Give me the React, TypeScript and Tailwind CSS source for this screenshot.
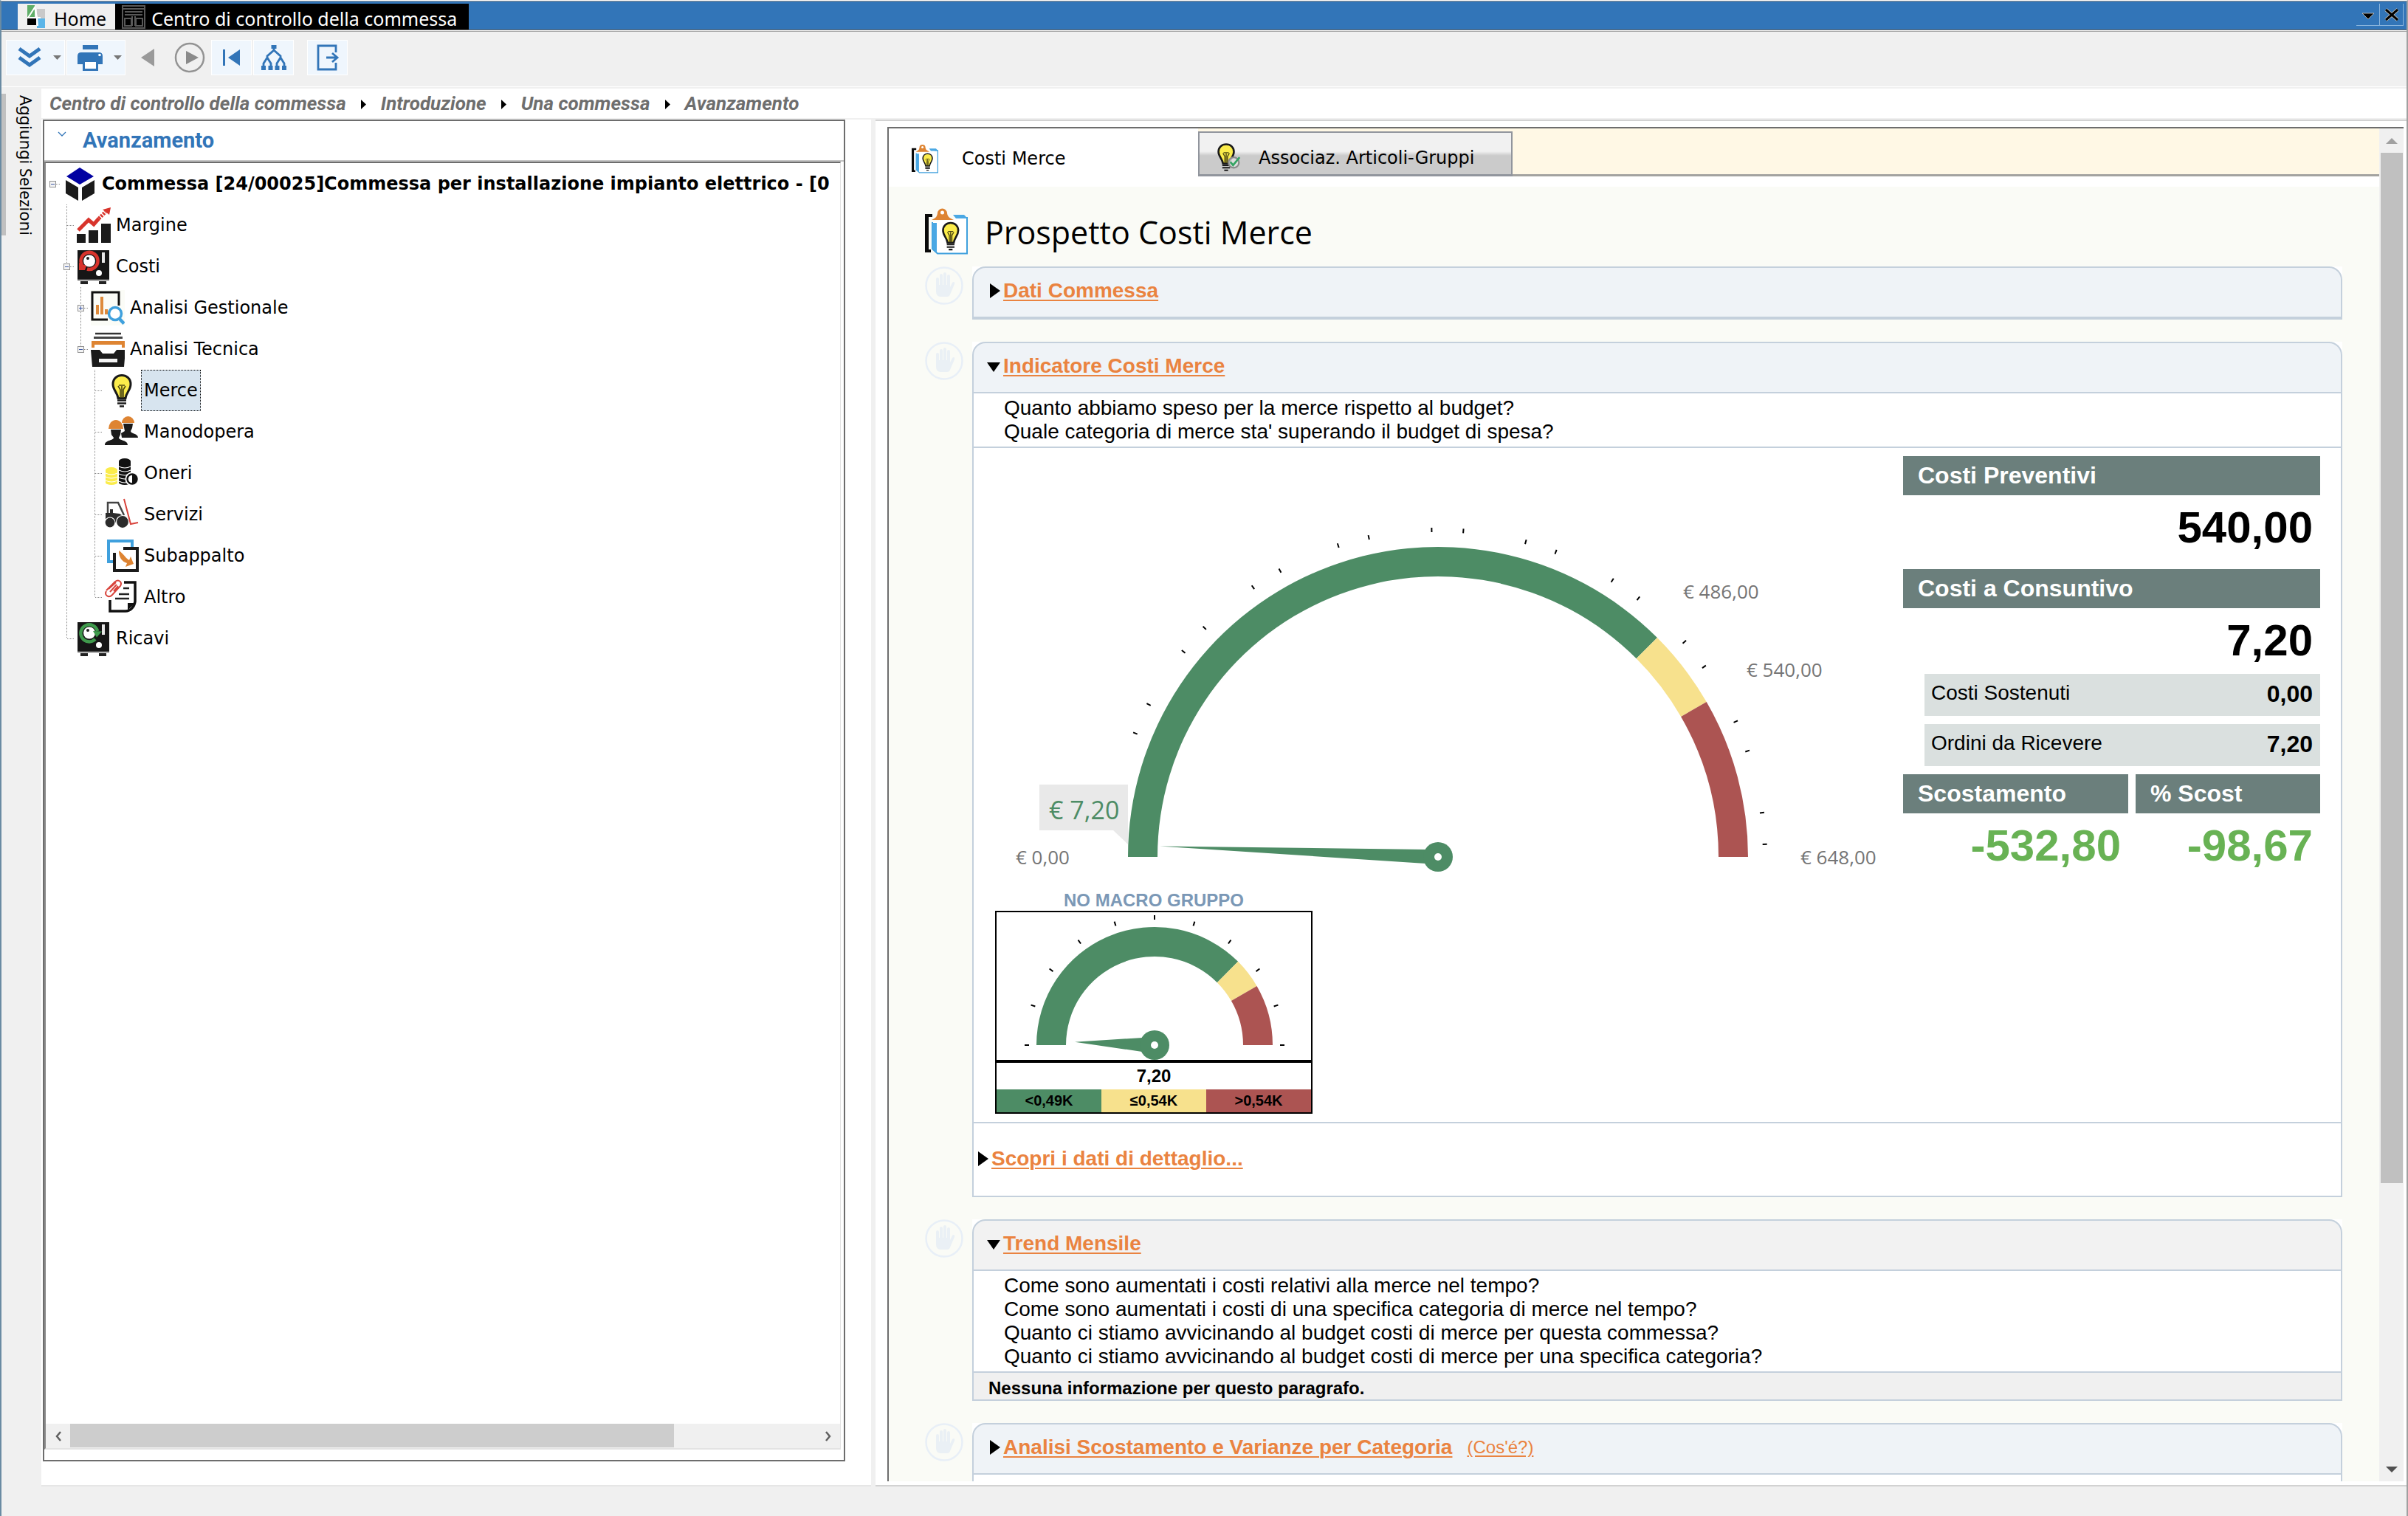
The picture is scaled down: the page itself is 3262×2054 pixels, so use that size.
import React, { useState } from 'react'
import clsx from 'clsx'

const GREEN = '#4d8c65'
const YELLOW = '#f7e18d'
const RED = '#ac5452'

/* ---------- gauge ---------- */

// angle in degrees, 0 = left end of the half circle, 180 = right end
function polar(cx: number, cy: number, r: number, deg: number): [number, number] {
  const a = (deg * Math.PI) / 180
  return [cx - r * Math.cos(a), cy - r * Math.sin(a)]
}

function band(cx: number, cy: number, r1: number, r2: number, from: number, to: number) {
  const [ax, ay] = polar(cx, cy, r2, from)
  const [bx, by] = polar(cx, cy, r2, to)
  const [dx, dy] = polar(cx, cy, r1, to)
  const [ex, ey] = polar(cx, cy, r1, from)
  return `M${ax} ${ay}A${r2} ${r2} 0 0 1 ${bx} ${by}L${dx} ${dy}A${r1} ${r1} 0 0 0 ${ex} ${ey}Z`
}

type DialProps = {
  cx: number
  cy: number
  inner: number
  outer: number
  needle: number
  ticks: number[]
  tickRadius: number
}

function Dial({ cx, cy, inner, outer, needle, ticks, tickRadius }: DialProps) {
  const [tx, ty] = polar(cx, cy, needle, 2.2)
  const [ux, uy] = polar(cx, cy, 19, 32)
  const [lx, ly] = polar(cx, cy, 19, -28)
  return (
    <g>
      <path d={band(cx, cy, inner, outer, 0, 135)} fill={GREEN} />
      <path d={band(cx, cy, inner, outer, 135, 150)} fill={YELLOW} />
      <path d={band(cx, cy, inner, outer, 150, 180)} fill={RED} />
      {ticks.map((t) => {
        const [x1, y1] = polar(cx, cy, tickRadius, t)
        const [x2, y2] = polar(cx, cy, tickRadius + 6, t)
        return <line key={t} x1={x1} y1={y1} x2={x2} y2={y2} stroke="#000" strokeWidth="2" />
      })}
      <polygon points={`${tx},${ty} ${ux},${uy} ${lx},${ly}`} fill={GREEN} />
      <circle cx={cx} cy={cy} r="20" fill={GREEN} />
      <circle cx={cx} cy={cy} r="5" fill="#fff" />
    </g>
  )
}

const bigTicks = Array.from({ length: 32 }, (_, i) => i + 1)
  .filter((n) => n > 3 && n % 3 !== 0)
  .map((n) => (n * 180) / 32.4)
const smallTicks = Array.from({ length: 11 }, (_, i) => i * 18)

function BigGauge() {
  return (
    <svg viewBox="0 0 1259 583" className="block w-full font-['Open_Sans',sans-serif]" role="img" aria-label="Indicatore costi merce">
      <Dial cx={629} cy={554} inner={380} outer={420} needle={377} ticks={bigTicks} tickRadius={440} />
      <path d="M89 456H209V537L189 518H89Z" fill="#e9e9e9" />
      <text x="102" y="503" className="text-[34px]" fill={GREEN}>€ 7,20</text>
      <g className="text-[26px]" fill="#757575">
        <text x="57" y="564">€ 0,00</text>
        <text x="961" y="204">€ 486,00</text>
        <text x="1047" y="310">€ 540,00</text>
        <text x="1120" y="564">€ 648,00</text>
      </g>
    </svg>
  )
}

/* ---------- icons ---------- */

function BulbShape() {
  return (
    <g>
      <path d="M23 3.5c-7 0-12 5-12 12 0 8 6 11 7 19h10c1-8 7-11 7-19 0-7-5-12-12-12z" fill="#fbec4b" stroke="#1a1a1a" strokeWidth="3" />
      <path d="M18 18l3 5v11M28 18l-3 5v11M19 17h8M23 18v16" fill="none" stroke="#4d4711" strokeWidth="1.6" />
      <path d="M17 37.5h12M17 41.5h12M20 45.5h6" stroke="#1a1a1a" strokeWidth="2.4" />
    </g>
  )
}

function SafeShape({ tone }: { tone: string }) {
  return (
    <g>
      <path d="M1 2h43v41H1z" fill="#161616" />
      <path d="M1 41h43v2H1z" fill="#555" />
      <path d="M5 44h10v4H5zM30 44h10v4H30z" fill="#222" />
      <circle cx="17" cy="16.5" r="8" fill="#fff" />
      <circle cx="15" cy="13" r="2" fill="#222" />
      <path d="M34 5h4v14h-4z" fill="#e8e8e8" />
      <circle cx="30" cy="33" r="4" fill="#fff" />
      <g fill="none" stroke={tone} strokeWidth="4.5">
        {tone === '#d8342c' ? (
          <>
            <path d="M14 27.500A11.500 11.500 0 1 0 7 22" />
            <path d="M3 19l10 4-2 6H3z" fill={tone} stroke="none" />
          </>
        ) : (
          <>
            <path d="M25 25A11.500 11.500 0 1 1 28 14" />
            <path d="M22 14l12 .5-7 8z" fill={tone} stroke="none" />
          </>
        )}
      </g>
    </g>
  )
}

const treeIcons: Record<string, React.ReactNode> = {
  cube: (
    <>
      <path d="M23 2l19 12-19 11L5 14z" fill="#0202a2" />
      <path d="M4 19l17 10v18L4 37zM43 19L26 29v18l17-10z" fill="#1b1b1b" />
    </>
  ),
  margine: (
    <>
      <path d="M0 36h12v12H0zM16 31h13v17H16zM33 22h13v26H33z" fill="#1b1b1b" />
      <path d="M2 31l14-14 7 6 7-8" fill="none" stroke="#d8342c" strokeWidth="5" />
      <path d="M30 15l9-9" stroke="#d8342c" strokeWidth="5" strokeDasharray="2.5 1.5" />
      <path d="M46 0l-2 10-9-7z" fill="#d8342c" />
    </>
  ),
  costi: <SafeShape tone="#d8342c" />,
  ricavi: <SafeShape tone="#3f9a4c" />,
  gestionale: (
    <>
      <path d="M0 0h46v48H0z" fill="#fbfcf7" />
      <path d="M38 21V3H2v37h21" fill="none" stroke="#111" strokeWidth="3" />
      <path d="M7 20h4v13H7zM13 9h4v24h-4zM19 26h4v7h-4z" fill="#de8a3c" />
      <circle cx="33" cy="32" r="8.5" fill="#fff" stroke="#3fa0dd" strokeWidth="3.5" />
      <path d="M38.5 38.5l6.5 7" stroke="#3fa0dd" strokeWidth="4.5" />
    </>
  ),
  tecnica: (
    <>
      <path d="M6 3h35" stroke="#333" strokeWidth="2.5" />
      <path d="M4 8.500h39" stroke="#444" strokeWidth="3" />
      <path d="M1 13h45v9h-4v-4H5v4H1z" fill="#de8432" />
      <path d="M0 25h12l4 5h15l4-5h12l-2 23H2z" fill="#1b1b1b" />
      <path d="M11 37h25v5H11z" fill="#f4f4f4" />
    </>
  ),
  merce: <BulbShape />,
  manodopera: (
    <>
      <path d="M23 12a8.500 9 0 0 1 17 0z" fill="#de8432" />
      <path d="M25 13h13l-1 6-2 4c0 4 10 3 10 9H23l-1-6 5-3z" fill="#1b1b1b" />
      <path d="M5 20a10 12 0 0 1 20 0z" fill="#de8432" />
      <path d="M8 21h14l-1 7-2 4c0 4 12 3 12 10H0c0-7 12-6 12-10l-3-4z" fill="#1b1b1b" />
    </>
  ),
  oneri: (
    <>
      <path d="M1 20a8 4 0 0 1 16 0v17a8 3 0 0 1-16 0z" fill="#fbec4b" />
      <path d="M1 24q8 4 16 0M1 29q8 4 16 0M1 34q8 4 16 0" fill="none" stroke="#fff" strokeWidth="1" />
      <path d="M19 8a8 4 0 0 1 16 0v29a8 3 0 0 1-16 0z" fill="#111" />
      <path d="M19 15q8 4 16 0M19 20q8 4 16 0M19 25q8 4 16 0M19 30q8 4 16 0M19 35q8 4 16 0" fill="none" stroke="#fff" strokeWidth="1.2" />
      <circle cx="37" cy="32" r="9.5" fill="#fff" />
      <circle cx="37" cy="32" r="6.5" fill="#fff" stroke="#111" strokeWidth="2.5" />
      <path d="M37 25a7 7 0 0 1 0 14z" fill="#111" />
    </>
  ),
  servizi: (
    <>
      <path d="M4 22V8h14l8 17" fill="none" stroke="#444" strokeWidth="2.5" />
      <path d="M7 17h4v5l9 1 6 4v8H1V22h6z" fill="#2b2b2b" />
      <circle cx="7" cy="35" r="7" fill="#2b2b2b" stroke="#fff" strokeWidth="1.2" />
      <circle cx="24" cy="34" r="8.5" fill="#2b2b2b" stroke="#fff" strokeWidth="1.2" />
      <path d="M26 3l9 34 10-2" fill="none" stroke="#d8443c" strokeWidth="2" />
    </>
  ),
  subappalto: (
    <>
      <path d="M37 12V4H5v28h8" fill="none" stroke="#3fa0dd" strokeWidth="4" />
      <path d="M25 14h19v30H13V20" fill="none" stroke="#1b1b1b" strokeWidth="4" />
      <path d="M19 17c7 5 9 10 14 13l2-5 4 10-11 4 2-5c-7-2-11-8-11-17z" fill="#de8432" />
    </>
  ),
  altro: (
    <>
      <path d="M26 4h15v26c-1 7-6 13-13 13H7V28" fill="none" stroke="#111" strokeWidth="3.5" />
      <path d="M41 32H31v10z" fill="#111" />
      <path d="M25 12h8M19 20h14M14 26h19" stroke="#222" strokeWidth="2.5" />
      <path d="M2 15L14 3c5-4 10 1 7 6L10 21c-5 5-11 0-8-5M7 17l9-10M5 13L15 4M12 16l6-7" fill="none" stroke="#d8443c" strokeWidth="2" />
    </>
  ),
}

function ClipboardIcon({ className }: { className: string }) {
  return (
    <svg viewBox="0 0 58 64" className={className}>
      <path d="M10 9H0v52h8v-4H5V13h5z" fill="#0a0a0a" />
      <path d="M10 20v36l7 6.500h40V14h-7" fill="#fff" stroke="#3fa0dd" strokeWidth="2" />
      <path d="M10 21h6v40l-6-5zM38 10h15l5 5H42z" fill="#4aa8e4" />
      <path d="M9 17c6-3 7-4 8-9a6.500 6.500 0 0 1 13 0c1 5 3 6 9 9z" fill="#de8432" />
      <circle cx="23.5" cy="7" r="2.5" fill="#fff" />
      <g transform="translate(15 18) scale(.86)">
        <BulbShape />
      </g>
    </svg>
  )
}

function HandIcon() {
  return (
    <svg viewBox="0 0 52 52" className="h-13 w-13 shrink-0" fill="#eaf0f5">
      <circle cx="26" cy="26" r="24.5" fill="none" stroke="#e8eff7" strokeWidth="2.5" />
      <rect x="15" y="15" width="4" height="16" rx="2" />
      <rect x="20" y="10" width="4" height="20" rx="2" />
      <rect x="25" y="8" width="4" height="20" rx="2" />
      <rect x="30" y="11" width="4" height="20" rx="2" />
      <path d="M15 25h19v3l3-6c2-2 4-1 3 2l-6 14c-1 3-3 3-6 3h-7c-4 0-6-3-6-7z" />
    </svg>
  )
}

/* ---------- title bar + toolbar ---------- */

function TitleBar() {
  return (
    <header className="flex h-[42px] shrink-0 items-start border-b border-t border-b-[#a0a0a0] border-t-[#8c8c8c] bg-white font-['Noto_Sans',sans-serif] text-[25px]">
      <div className="flex h-[39px] flex-1 items-end border-b border-[#5f5f5f] bg-[#3275b8] pl-[22px]">
        <button className="flex h-[35px] items-center gap-3 bg-[#f0f0f0] pl-[13px] pr-3">
          <svg viewBox="0 0 24 31" className="h-[31px] w-6">
            <path d="M0 0h10v16H0z" fill="#5fae68" />
            <path d="M13 5h11v14H13z" fill="#c9c9c9" />
            <path d="M0 18h12v9H0z" fill="#000" />
            <path d="M13 18h11v13H13z" fill="#5bb5e8" />
            <path d="M1 17L10 3l3 13 1 12M4 17h14" fill="none" stroke="#fff" strokeWidth="2" />
          </svg>
          <span className="pt-1 leading-8">Home</span>
        </button>
        <button className="flex h-[35px] items-center gap-2 bg-black pl-[9px] pr-4 text-white">
          <svg viewBox="0 0 32 32" className="h-8 w-8" fill="none" stroke="#585858" strokeWidth="2">
            <path d="M1 1h30v30H1zM1 5h30M4 9h24M4 13h24M4 18h9v10H4zM19 18h9v10h-9zM14 15v13M18 15v13" />
          </svg>
          <span className="pt-1 leading-8">Centro di controllo della commessa</span>
        </button>
        <div className="ml-auto mr-1 flex h-[35px] items-start">
          <button aria-label="Elenco finestre" className="flex h-[30px] w-8 items-center justify-center border-b border-r border-[#8db6dd]">
            <svg viewBox="0 0 18 10" className="mt-1 h-2.5 w-[18px]">
              <path d="M1 1h16L9 9z" fill="#000" stroke="#d8cfc0" strokeWidth=".8" />
            </svg>
          </button>
          <button aria-label="Chiudi" className="flex h-[30px] w-8 items-center justify-center border-b border-r border-[#8db6dd]">
            <svg viewBox="0 0 20 18" className="h-[18px] w-5">
              <path d="M2 2l16 14M18 2L2 16" stroke="#d8cfc0" strokeWidth="4.5" />
              <path d="M2 2l16 14M18 2L2 16" stroke="#000" strokeWidth="3" />
            </svg>
          </button>
        </div>
      </div>
    </header>
  )
}

function ToolButton({ label, wide, plain, className, children }: { label: string; wide?: boolean; plain?: boolean; className?: string; children: React.ReactNode }) {
  return (
    <button
      aria-label={label}
      title={label}
      className={clsx(
        'flex h-12 items-center border',
        wide ? 'w-20 justify-between pl-[13px] pr-1' : 'w-[55px] justify-center',
        plain ? 'border-transparent' : 'border-white bg-[#eff6fd]',
        className
      )}
    >
      {children}
    </button>
  )
}

function Caret() {
  return (
    <svg viewBox="0 0 11 6" className="h-1.5 w-[11px]">
      <path d="M0 0h11L5.500 6z" fill="#777" />
    </svg>
  )
}

function Toolbar() {
  return (
    <div className="mb-0.5 flex h-[75px] shrink-0 items-start gap-0.5 border-b border-white pl-1.5 pt-[11px]">
      <ToolButton label="Espandi" wide>
        <svg viewBox="0 0 36 34" className="h-[34px] w-9" fill="none" stroke="#3275b8" strokeWidth="5">
          <path d="M4 5l14 10L32 5M4 17l14 10 14-10" />
        </svg>
        <Caret />
      </ToolButton>
      <ToolButton label="Stampa" wide>
        <svg viewBox="0 0 36 36" className="h-9 w-9" fill="#3275b8">
          <path d="M8 1h21v6H8zM1 16q0-5 5-5h24q5 0 5 5v11h-6v-6H8v6H1z" />
          <path d="M9.500 22.500h18v12h-18z" fill="#fff" stroke="#3275b8" strokeWidth="3" />
          <circle cx="31" cy="14.5" r="1.8" fill="#fff" />
        </svg>
        <Caret />
      </ToolButton>
      <ToolButton label="Indietro" plain>
        <svg viewBox="0 0 18 24" className="h-6 w-[18px]">
          <path d="M18 0v24L0 12z" fill="#9a9a9a" />
        </svg>
      </ToolButton>
      <ToolButton label="Avanti" plain>
        <svg viewBox="0 0 42 42" className="h-[42px] w-[42px]">
          <circle cx="21" cy="21" r="19" fill="none" stroke="#939393" strokeWidth="2.5" />
          <path d="M16 12v18l17-9z" fill="#8a8a8a" />
        </svg>
      </ToolButton>
      <ToolButton label="Inizio">
        <svg viewBox="0 0 24 24" className="h-6 w-6" fill="#3275b8">
          <path d="M0 1h3v22H0zM23 1v22L7 12z" />
        </svg>
      </ToolButton>
      <ToolButton label="Struttura">
        <svg viewBox="0 0 36 36" className="h-9 w-9">
          <path d="M18 4v4l-9 8v4M18 8l9 8v4M9 18l-5 8v6M9 18l5 8v6M27 18l-5 8v6M27 18l5 8v6" fill="none" stroke="#3275b8" strokeWidth="2.8" />
          <path d="M14.500 1h7v5h-7zM1 29h6v6H1zM10.500 29h6v6h-6zM19.500 29h6v6h-6zM29 29h6v6h-6z" fill="#3275b8" />
        </svg>
      </ToolButton>
      <ToolButton label="Esci" className="ml-4">
        <svg viewBox="0 0 32 36" className="h-9 w-8" fill="none" stroke="#3275b8" strokeWidth="2.8">
          <path d="M27 11V2H3v32h24v-9" />
          <path d="M14 18h14M22 12l7 6-7 6" />
        </svg>
      </ToolButton>
    </div>
  )
}

function Breadcrumb() {
  const steps = ['Centro di controllo della commessa', 'Introduzione', 'Una commessa', 'Avanzamento']
  return (
    <nav className="flex h-10 shrink-0 items-center gap-5 bg-white pl-[11px] font-[Roboto,sans-serif] text-[26px] font-bold italic leading-10 text-[#6e6e6e]">
      {steps.map((s, i) => (
        <React.Fragment key={s}>
          {i > 0 && (
            <svg viewBox="0 0 7 13" className="mt-0.5 h-[13px] w-[7px]">
              <path d="M0 0l7 6.500L0 13z" fill="#000" />
            </svg>
          )}
          <a href="#">{s}</a>
        </React.Fragment>
      ))}
    </nav>
  )
}

/* ---------- tree ---------- */

// guides, one char per column: '|' line, '+' line with branch, 'L' last branch,
// 'm'/'p' minus/plus box, capitals when the line ends there, '-' lone box, ' ' empty
type Node = { label: string; icon: string; guides: string }

const nodes: Node[] = [
  { label: 'Commessa [24/00025]Commessa per installazione impianto elettrico - [0', icon: 'cube', guides: '-' },
  { label: 'Margine', icon: 'margine', guides: ' +' },
  { label: 'Costi', icon: 'costi', guides: ' m' },
  { label: 'Analisi Gestionale', icon: 'gestionale', guides: ' |p' },
  { label: 'Analisi Tecnica', icon: 'tecnica', guides: ' |M' },
  { label: 'Merce', icon: 'merce', guides: ' | +' },
  { label: 'Manodopera', icon: 'manodopera', guides: ' | +' },
  { label: 'Oneri', icon: 'oneri', guides: ' | +' },
  { label: 'Servizi', icon: 'servizi', guides: ' | +' },
  { label: 'Subappalto', icon: 'subappalto', guides: ' | +' },
  { label: 'Altro', icon: 'altro', guides: ' | L' },
  { label: 'Ricavi', icon: 'ricavi', guides: ' L' },
]

function Guide({ kind }: { kind: string }) {
  const box = 'mpM-'.includes(kind)
  const end = '|+mp'.includes(kind) ? 56 : 28
  return (
    <svg viewBox="0 0 19 56" className="h-14 w-[19px] shrink-0 overflow-visible">
      {kind !== ' ' && kind !== '-' && <path d={`M9.5 0V${end}`} stroke="#8a8a8a" strokeWidth="1" strokeDasharray="1 1" />}
      {kind !== ' ' && kind !== '|' && <path d="M10 28.500h10" stroke="#8a8a8a" strokeWidth="1" strokeDasharray="1 1" />}
      {box && (
        <>
          <rect x="5.5" y="24.5" width="8" height="8" fill="#f4f4f4" stroke="#919191" />
          <path d={kind === 'p' ? 'M7 28.500h5M9.500 26v5' : 'M7 28.500h5'} stroke="#3b57a6" strokeWidth="1" />
        </>
      )}
    </svg>
  )
}

function ScrollArrow({ dir, label }: { dir: 'left' | 'right' | 'up' | 'down'; label: string }) {
  const d = {
    left: 'M11 2L6 8l5 6',
    right: 'M5 2l5 6-5 6',
    up: 'M0 12h16L8 4z',
    down: 'M0 4h16l-8 8z',
  }[dir]
  const line = dir === 'left' || dir === 'right'
  return (
    <button aria-label={label} className="flex h-[33px] w-[33px] shrink-0 items-center justify-center">
      <svg viewBox="0 0 16 16" className="h-4 w-4" fill={line ? 'none' : dir === 'up' ? '#a0a0a0' : '#505050'} stroke={line ? '#606060' : 'none'} strokeWidth="2.5">
        <path d={d} />
      </svg>
    </button>
  )
}

function TreePanel() {
  const [selected, setSelected] = useState('Merce')
  return (
    <section className="flex w-[1124px] shrink-0 flex-col border-b-2 border-[#e6e6e6] bg-white pb-8 pl-0.5 pr-[35px]">
      <div className="flex min-h-0 flex-1 flex-col border-2 border-[#6d6d6d] pb-3.5 pr-1">
        <h2 className="-mr-1 flex h-[55px] shrink-0 items-start border-b-2 border-[#c3c3c3] pl-[18px] font-[Roboto,sans-serif] text-[29px] font-bold leading-[52px] text-[#3275b8]">
          <svg viewBox="0 0 12 8" className="mr-[22px] mt-3.5 h-2 w-3" fill="none" stroke="#3275b8" strokeWidth="1.3">
            <path d="M1 1l5 5 5-5" />
          </svg>
          Avanzamento
        </h2>
        <div className="flex min-h-0 flex-1 flex-col border-b-2 border-l-2 border-r border-t-2 border-b-[#e3e3e3] border-l-[#8a8a8a] border-r-[#e3e3e3] border-t-[#6d6d6d]">
          <ul className="min-h-0 flex-1 overflow-hidden font-['DejaVu_Sans',Verdana,sans-serif] text-2xl">
            {nodes.map((n, i) => (
              <li key={n.label} className="flex h-14 items-center">
                {n.guides.split('').map((g, k) => (
                  <Guide key={k} kind={g} />
                ))}
                <svg viewBox="0 0 46 48" className="ml-1 h-12 w-[46px] shrink-0">
                  {treeIcons[n.icon]}
                </svg>
                <button
                  onClick={() => setSelected(n.label)}
                  className={clsx(
                    'ml-[3px] flex h-14 items-center whitespace-nowrap border px-[3px] leading-8',
                    selected === n.label ? 'border-dotted border-black bg-[#d7e4ef]' : 'border-transparent',
                    i === 0 && 'font-bold'
                  )}
                >
                  {n.label}
                </button>
              </li>
            ))}
          </ul>
          <div className="flex shrink-0 bg-[#f0f0f0]">
            <ScrollArrow dir="left" label="Scorri a sinistra" />
            <div className="flex-1 pb-px">
              <div className="h-full w-[81%] bg-[#cdcdcd]" />
            </div>
            <ScrollArrow dir="right" label="Scorri a destra" />
          </div>
        </div>
      </div>
    </section>
  )
}

/* ---------- report ---------- */

function Disclosure({ open, children }: { open?: boolean; children: React.ReactNode }) {
  return (
    <button aria-expanded={!!open} className="flex gap-[3px] text-[28px] font-bold leading-8 text-[#ea8340]">
      <svg viewBox="0 0 20 32" className="h-8 w-5" fill="#000">
        <path d={open ? 'M1 11h18L10 24z' : 'M5 6v20l14-10z'} />
      </svg>
      <span className="underline decoration-2 underline-offset-3">{children}</span>
    </button>
  )
}

type CardProps = {
  title: string
  open?: boolean
  closed?: boolean
  gray?: boolean
  extra?: React.ReactNode
  children?: React.ReactNode
}

function Card({ title, open, closed, gray, extra, children }: CardProps) {
  return (
    <div className="mb-[30px] flex gap-3">
      <HandIcon />
      <section className="min-w-0 flex-1 bg-white">
        <div
          className={clsx(
            'flex items-center gap-5 rounded-t-[18px] border-2 border-[#c4d0dc] pb-[19px] pl-[17px] pt-[15px]',
            closed && 'border-b-4',
            gray ? 'bg-[#f2f2f2]' : 'bg-[#eff3f7]'
          )}
        >
          <Disclosure open={open}>{title}</Disclosure>
          {extra}
        </div>
        {children && <div className="border-x-2 border-b-2 border-[#c4d0dc]">{children}</div>}
      </section>
    </div>
  )
}

function Questions({ lines }: { lines: string[] }) {
  return (
    <div className="border-b-2 border-[#c4d0dc] py-1 pl-[41px] text-[28px] leading-8">
      {lines.map((l) => (
        <p key={l}>{l}</p>
      ))}
    </div>
  )
}

function KpiHeader({ children }: { children: React.ReactNode }) {
  return <dt className="bg-[#6b7f7c] pl-5 text-[32px] font-bold leading-[53px] text-white">{children}</dt>
}

function KpiValue({ green, children }: { green?: boolean; children: React.ReactNode }) {
  return <dd className={clsx('pr-2.5 text-right text-[60px] font-bold leading-[88px]', green && 'text-[#68b254]')}>{children}</dd>
}

function KpiRow({ label, value }: { label: string; value: string }) {
  return (
    <dl className="mb-[11px] ml-[29px] flex h-[57px] justify-between bg-[#dae0df] pl-[9px] pr-2.5">
      <dt className="text-[28px] leading-[52px]">{label}</dt>
      <dd className="text-[32px] font-bold leading-[54px]">{value}</dd>
    </dl>
  )
}

function KpiPanel() {
  return (
    <aside className="mr-7 w-[565px] shrink-0 pt-[11px]">
      <dl className="mb-3">
        <KpiHeader>Costi Preventivi</KpiHeader>
        <KpiValue>540,00</KpiValue>
      </dl>
      <dl className="mb-px">
        <KpiHeader>Costi a Consuntivo</KpiHeader>
        <KpiValue>7,20</KpiValue>
      </dl>
      <KpiRow label="Costi Sostenuti" value="0,00" />
      <KpiRow label="Ordini da Ricevere" value="7,20" />
      <div className="flex gap-2.5">
        <dl className="flex-1">
          <KpiHeader>Scostamento</KpiHeader>
          <KpiValue green>-532,80</KpiValue>
        </dl>
        <dl className="w-[250px]">
          <KpiHeader>% Scost</KpiHeader>
          <KpiValue green>-98,67</KpiValue>
        </dl>
      </div>
    </aside>
  )
}

function MiniGauge() {
  return (
    <figure className="mb-[11px] ml-[29px] mt-4 w-[430px] text-center font-bold">
      <figcaption className="text-2xl leading-7 text-[#7b98b6]">NO MACRO GRUPPO</figcaption>
      <div className="border-2 border-black">
        <svg viewBox="0 0 426 200" className="block w-full">
          <Dial cx={214} cy={180} inner={120} outer={160} needle={108} ticks={smallTicks} tickRadius={170} />
        </svg>
        <div className="border-t-4 border-black text-2xl leading-9">7,20</div>
        <div className="flex text-xl leading-[31px]">
          <span className="flex-1 bg-[#4d8c65]">&lt;0,49K</span>
          <span className="flex-1 bg-[#f7e18d]">≤0,54K</span>
          <span className="flex-1 bg-[#ac5452]">&gt;0,54K</span>
        </div>
      </div>
    </figure>
  )
}

function Tabs() {
  return (
    <div className="bg-white pb-3.5 font-['DejaVu_Sans',Tahoma,sans-serif] text-2xl">
      <div role="tablist" className="flex h-[65px] items-stretch bg-[#fff8e5]">
        <button role="tab" aria-selected="true" className="flex w-[419px] items-center gap-8 bg-white pl-[31px] pt-4">
          <ClipboardIcon className="h-10 w-9" />
          Costi Merce
        </button>
        <button
          role="tab"
          aria-selected="false"
          className="mt-1 flex w-[426px] items-center gap-6 border-2 border-b-[3px] border-[#91959d] bg-linear-to-b from-[#f1f1f1] from-45% to-[#cbcbcb] to-55% pl-6 pt-3"
        >
          <svg viewBox="0 0 36 42" className="h-10 w-8">
            <g transform="translate(-9 -3) scale(.98 .94)">
              <BulbShape />
            </g>
            <circle cx="25" cy="28" r="8" fill="#e2e2e2" fillOpacity=".8" stroke="#8a8a8a" strokeWidth="2.5" />
            <path d="M20 27l4 5 10-12" fill="none" stroke="#35a463" strokeWidth="3" />
          </svg>
          Associaz. Articoli-Gruppi
        </button>
        <div className="flex-1 border-b-[3px] border-[#a3a3a0]" />
      </div>
    </div>
  )
}

function Report() {
  return (
    <main className="flex min-w-0 flex-1 flex-col border-b-2 border-t-2 border-[#d2d2d2] bg-white pb-[5px] pl-4 pr-1 pt-2">
      <div className="flex min-h-0 flex-1 border-l-2 border-t-2 border-[#6d6d6d]">
        <div className="min-w-0 flex-1 overflow-hidden bg-[#fafbf6] font-['Liberation_Sans',Arial,sans-serif]">
          <Tabs />
          <div className="pl-[49px] pr-[50px] pt-7">
            <h1 className="mb-4 flex h-16 items-center gap-[23px] font-['Open_Sans',sans-serif] text-[43px]">
              <ClipboardIcon className="h-16 w-[58px]" />
              <span className="pt-1">Prospetto Costi Merce</span>
            </h1>

            <Card title="Dati Commessa" closed />

            <Card title="Indicatore Costi Merce" open>
              <Questions
                lines={['Quanto abbiamo speso per la merce rispetto al budget?', "Quale categoria di merce sta' superando il budget di spesa?"]}
              />
              <div className="border-b-2 border-[#c4d0dc]">
                <div className="flex items-start">
                  <div className="min-w-0 flex-1">
                    <BigGauge />
                  </div>
                  <KpiPanel />
                </div>
                <MiniGauge />
              </div>
              <div className="pb-[34px] pl-px pt-8">
                <Disclosure>Scopri i dati di dettaglio...</Disclosure>
              </div>
            </Card>

            <Card title="Trend Mensile" open gray>
              <Questions
                lines={[
                  'Come sono aumentati i costi relativi alla merce nel tempo?',
                  'Come sono aumentati i costi di una specifica categoria di merce nel tempo?',
                  'Quanto ci stiamo avvicinando al budget costi di merce per questa commessa?',
                  'Quanto ci stiamo avvicinando al budget costi di merce per una specifica categoria?',
                ]}
              />
              <p className="bg-[#f0f0f0] pb-px pl-5 pt-[7px] text-2xl font-bold leading-7">Nessuna informazione per questo paragrafo.</p>
            </Card>

            <Card
              title="Analisi Scostamento e Varianze per Categoria"
              extra={
                <a href="#" className="text-2xl leading-8 text-[#ea8340] underline underline-offset-3">
                  (Cos'é?)
                </a>
              }
            >
              <div className="h-24" />
            </Card>
          </div>
        </div>
        <div className="flex w-[33px] shrink-0 flex-col bg-[#f0f0f0]">
          <ScrollArrow dir="up" label="Scorri in alto" />
          <div className="flex-1 pl-0.5 pr-px">
            <div className="h-[79%] bg-[#c0c0c0]" />
          </div>
          <ScrollArrow dir="down" label="Scorri in basso" />
        </div>
      </div>
    </main>
  )
}

export default function App() {
  return (
    <div className="flex h-screen flex-col overflow-hidden border-l-2 border-r-2 border-t border-l-[#6a8ba3] border-r-[#a0a0a0] border-t-white bg-[#f0f0f0] text-black">
      <TitleBar />
      <Toolbar />
      <div className="flex min-h-0 flex-1 pb-10">
        <div className="w-[54px] shrink-0 pt-[7px]">
          <button className="border-l-[6px] border-[#c0c0c0] pl-3 pt-0.5 font-['Noto_Sans',sans-serif] text-[22px] leading-8 [writing-mode:vertical-rl]">
            Aggiungi Selezioni
          </button>
        </div>
        <div className="flex min-w-0 flex-1 flex-col">
          <Breadcrumb />
          <div className="flex min-h-0 flex-1 gap-1.5 pt-0.5">
            <TreePanel />
            <Report />
          </div>
        </div>
      </div>
    </div>
  )
}
